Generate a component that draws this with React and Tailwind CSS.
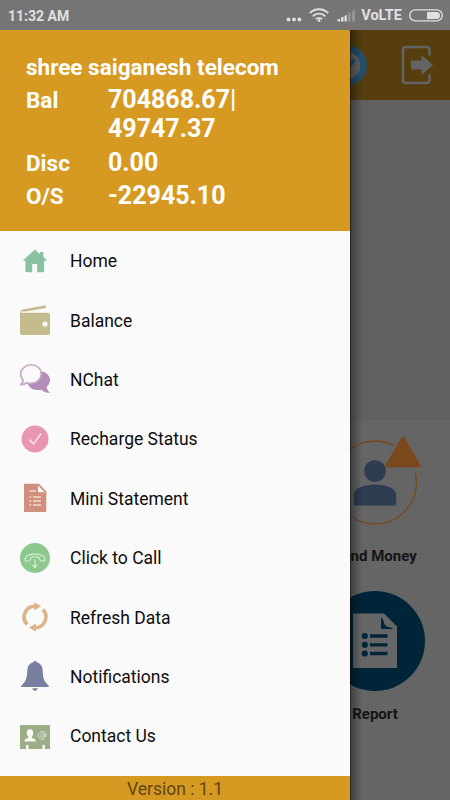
import React from "react";

const HomeIcon = () => (
  <svg viewBox="0 0 30 30" className="w-[30px] h-[30px] text-[#88c0a1]" fill="currentColor">
    <path d="M15 3.6 2.6 14.8h2.8v9.8q0 1.6 1.6 1.6h5.2V18h5v8.200h5.300q1.600 0 1.600-1.600v-9.800h3.300l-4-3.700V6h-3.400v2.200z" />
  </svg>
);

const WalletIcon = () => (
  <svg viewBox="0 0 30 30" className="w-[30px] h-[30px] text-[#c4bb8d]">
    <path d="M0 7.5Q.3 5 3 4.4L25 .2q1.2 0 1 2.9L6 6.6H1.6z" fill="currentColor" />
    <path d="M0 6.8q1 .9 2.5.9H28q2 0 2 2V28q0 2-2 2H2q-2 0-2-2z" fill="currentColor" />
    <circle cx="25" cy="19" r="2.6" fill="#fafafa" />
  </svg>
);

const ChatIcon = () => (
  <svg viewBox="0 0 30 30" className="w-[30px] h-[30px] text-[#b38db5]" fill="currentColor">
    <path d="M22 7.5c5 1.2 8 4.6 8 8.5 0 2.6-1.3 4.9-3.3 6.6.2 2.700 1 4.300 3.300 6.200-3.300.3-6-.7-8.200-3.100-6.800 1.200-12.300-1-13.900-5.700z" />
    <path
      d="M11.3.8C17 .8 21.3 4.9 21.3 10S17 19.3 11.3 19.300q-2 0-4.200-.6-2.200 2-6.500 2 2.400-2 2.600-4.300C1.500 14.600.7 12.500.7 10 .7 4.900 5.500.8 11.300.8z"
      fill="#fafafa"
      stroke="#c3a4c5"
      strokeWidth="1.6"
    />
  </svg>
);

const CheckIcon = () => (
  <svg viewBox="0 0 30 30" className="w-[30px] h-[30px]">
    <circle cx="15" cy="15" r="13.5" fill="#e997b0" />
    <path d="m9.3 15.600 4.300 4.300 7.500-10.400" fill="none" stroke="#f9e3ea" strokeWidth="1.5" />
  </svg>
);

const StatementIcon = () => (
  <svg viewBox="0 0 30 30" className="w-[30px] h-[30px]">
    <path d="M4 .8h15l7.300 7.700V29H4z" fill="#d18f7e" />
    <path d="M18 2.400v6.800h6.500z" fill="#fafafa" />
    <path
      d="M9.300 8H16M9.300 14h2M13 14h8M9.300 18h2M13 18h8M9.300 22h2M13 22h8"
      stroke="#f1d8d1"
      strokeWidth="1.7"
    />
  </svg>
);

const CallIcon = () => (
  <svg viewBox="0 0 30 30" className="w-[30px] h-[30px]">
    <circle cx="15" cy="15" r="15" fill="#8dc98f" />
    <g fill="none" stroke="#d5ecd6" strokeWidth="1.2" strokeLinejoin="round">
      <path d="M5.300 18v-2.800C7.200 9.700 22.800 9.700 24.700 15.200V18l-4.300-.2-1.400-3c-1.800-1.400-6.200-1.400-8 0l-1.400 3z" />
      <path d="M15 16.500v7.500M12.700 21.800 15 24.500l2.300-2.700" />
    </g>
  </svg>
);

const RefreshIcon = () => (
  <svg viewBox="0 0 30 30" className="w-[30px] h-[30px] text-[#dbb589]">
    <g fill="none" stroke="currentColor" strokeWidth="3.6">
      <path d="M7.200 22.600A10.800 10.800 0 0 1 15.500 4.300" />
      <path d="M22.800 7.400A10.800 10.800 0 0 1 14.500 25.700" />
    </g>
    <path d="m14.200.3 7 4-7 4.200zM15.800 21.500l-6.800 4 6.800 4.200z" fill="currentColor" />
  </svg>
);

const BellIcon = () => (
  <svg viewBox="0 0 30 30" className="w-[30px] h-[30px] text-[#787f9f]" fill="currentColor">
    <path d="M15 0q1.800 0 2.200 1.600c3.500 1 5.300 3.600 5.500 8 .3 6.800 1 11 5.600 14.600q1 1 .4 1.800H1.300q-.6-.8.4-1.800C6.300 20.600 7 16.400 7.300 9.600c.2-4.400 2-7 5.500-8Q13.200 0 15 0z" />
    <path d="M12.300 27.300h5.400q-.3 2.500-2.700 2.500t-2.700-2.500z" />
  </svg>
);

const ContactIcon = () => (
  <svg viewBox="0 0 30 30" className="w-[30px] h-[30px]">
    <path d="M1 4h28q1 0 1 1v23h-5v-4h-2.500v4h-14v-4H6v4H0V5q0-1 1-1z" fill="#9bae87" />
    <path
      d="M10 8.300c2.300 0 3.200 1.500 3.200 3.700 0 1.800-.6 3-1.400 3.800v1l3.300 1.500q.6.600.6 2.200H4.500q0-1.600.6-2.200l3.200-1.500v-1C7.300 15 6.800 13.800 6.800 12c0-2.200.9-3.700 3.200-3.700z"
      fill="#fafafa"
    />
    <g fill="none" stroke="#d6dfce" strokeWidth="1">
      <circle cx="22.300" cy="14.500" r="1.800" />
      <path d="M24.200 12.500v3q1.800 1 2-1.300c0-4.700-7.900-4.700-7.900.3 0 4 4 4.600 6.500 3.200" />
    </g>
  </svg>
);

const menuItems = [
  { label: "Home", Icon: HomeIcon },
  { label: "Balance", Icon: WalletIcon },
  { label: "NChat", Icon: ChatIcon },
  { label: "Recharge Status", Icon: CheckIcon },
  { label: "Mini Statement", Icon: StatementIcon },
  { label: "Click to Call", Icon: CallIcon },
  { label: "Refresh Data", Icon: RefreshIcon },
  { label: "Notifications", Icon: BellIcon },
  { label: "Contact Us", Icon: ContactIcon },
];

const StatusBar = () => (
  <div className="h-[30px] shrink-0 bg-[#757575] text-[#e0e0e0] flex items-center pl-2 pr-[7px]">
    <span className="text-[14px] font-bold leading-none pt-[2px]">11:32 AM</span>
    <div className="ml-auto flex items-center">
      <svg width="16" height="20" viewBox="0 0 16 20" fill="currentColor">
        <circle cx="2.500" cy="14.500" r="1.900" />
        <circle cx="8" cy="14.500" r="1.900" />
        <circle cx="13.400" cy="14.500" r="1.900" />
      </svg>
      <svg width="20" height="20" viewBox="0 0 20 20" className="ml-[7px]" fill="none" stroke="currentColor" strokeWidth="1.8">
        <path d="M.8 8.200C5.500 2.900 14.500 2.900 19.200 8.200M3.800 11.300c3.300-3.700 9.100-3.700 12.400 0M6.800 14.200c1.700-1.900 4.700-1.900 6.400 0" />
        <circle cx="10" cy="15.500" r="1.400" fill="currentColor" stroke="none" />
      </svg>
      <svg width="19" height="20" viewBox="0 0 19 20" className="ml-2" fill="currentColor">
        <path d="M.5 16.500v-2l2.500-.8v2.800zM4 16.500v-4l2.500-1v5zM7.500 16.500V11L9.800 9.700v6.800z" />
        <path d="M11 16.500V8.500L13.500 7v9.500zM15 16.500V6.200L18 4v12.500z" opacity=".3" />
      </svg>
      <span className="text-[14.500px] font-bold leading-none pt-[2px] ml-[5px]">VoLTE</span>
      <svg width="34" height="13" viewBox="0 0 34 13" className="ml-[7px]">
        <rect x=".7" y=".9" width="32.600" height="11" rx="5.500" fill="none" stroke="currentColor" strokeWidth="1.3" />
        <path d="M18 2.900h9.500a3.500 3.500 0 0 1 0 7H18z" fill="currentColor" />
      </svg>
    </div>
  </div>
);

const Toolbar = () => (
  <div className="h-[70px] shrink-0 bg-[#563e0f] flex items-center justify-end pr-4">
    <svg width="41" height="41" viewBox="0 0 41 41">
      <circle cx="20.500" cy="20.500" r="17" fill="#626262" stroke="#23506f" strokeWidth="6.5" />
      <path d="m13 21 5 6 10.500-12.500" fill="none" stroke="#23506f" strokeWidth="3.5" />
    </svg>
    <svg width="33" height="40" viewBox="0 0 33 40" className="ml-[34px]">
      <path
        d="M28.500 10.500V5q0-3-3-3H5Q2 2 2 5v30q0 3 3 3h20.500q3 0 3-3v-5.500"
        fill="none"
        stroke="#636363"
        strokeWidth="2.500"
      />
      <path d="M10 15.500h10.500V10L32 20 20.500 30v-5.500H10z" fill="#636363" />
    </svg>
  </div>
);

const SendMoneyIcon = () => (
  <svg width="100" height="100" viewBox="0 0 100 100">
    <circle cx="50" cy="49.500" r="41.500" fill="none" stroke="#79481b" strokeWidth="1.300" />
    <path d="M78 3 58 36h38z" fill="#656565" stroke="#656565" strokeWidth="5" />
    <path d="M78 4.500 61.500 33h33z" fill="#79481b" stroke="#79481b" strokeWidth="2.500" strokeLinejoin="round" />
    <circle cx="50" cy="38" r="10.800" fill="#2d3d52" />
    <path d="M28.800 72.500V62c0-14 42.400-14 42.400 0v10.500z" fill="#2d3d52" />
  </svg>
);

const ReportIcon = () => (
  <svg width="100" height="100" viewBox="0 0 100 100">
    <circle cx="50" cy="50" r="50" fill="#012538" />
    <path d="M28 22.500h31l13 13V77H28z" fill="#666" />
    <path d="M56.500 27v10.500h10.800q-7-1-8.500-4.500-.8-4-2.300-6z" fill="#012538" stroke="#012538" />
    <g fill="#012538">
      <circle cx="39.800" cy="45" r="3.100" />
      <circle cx="39.800" cy="53.800" r="3.100" />
      <circle cx="39.800" cy="62.500" r="3.100" />
    </g>
    <path d="M45 45h17.500M45 53.800h17.500M45 62.500h17.500" stroke="#012538" strokeWidth="3.300" />
  </svg>
);

const Tile = ({ label, children }) => (
  <div className="w-[150px] flex flex-col items-center gap-[14px] text-[15px] leading-[18px] font-bold text-[#141414]">
    {children}
    <span>{label}</span>
  </div>
);

const Stat = ({ name, children }) => (
  <div className="flex items-baseline">
    <span className="w-[82px] shrink-0 text-[22.500px] leading-none">{name}</span>
    <span className="text-[25px] leading-[29.300px]">{children}</span>
  </div>
);

const Drawer = () => (
  <aside className="absolute left-0 top-[30px] w-[350px] h-[770px] bg-[#fafafa] flex flex-col">
    <div className="h-[201px] shrink-0 bg-[#d69922] text-white font-bold pl-[26px] pt-[23px] flex flex-col gap-1">
      <div className="text-[22.500px] leading-[28px]">shree saiganesh telecom</div>
      <Stat name="Bal">
        704868.67|
        <br />
        49747.37
      </Stat>
      <Stat name="Disc">0.00</Stat>
      <Stat name="O/S">-22945.10</Stat>
    </div>
    <nav className="flex-1">
      {menuItems.map(({ label, Icon }) => (
        <div key={label} className="h-[59.400px] flex items-center pl-5 gap-5">
          <Icon />
          <span className="text-[17.500px] text-[#0d0d0d] pt-[1.500px]">{label}</span>
        </div>
      ))}
    </nav>
    <div className="h-6 shrink-0 bg-[#d69922] text-center text-[17.500px] leading-[27px] text-[#604614]">
      Version : 1.1
    </div>
    {/* edge shadow */}
    <div className="absolute left-full inset-y-0 w-3 border-l border-black/60 bg-linear-to-r from-black/35 to-transparent" />
  </aside>
);

export default function App() {
  return (
    <div className="relative w-[450px] h-[800px] overflow-hidden flex flex-col bg-[#656565] font-['Roboto',sans-serif]">
      <StatusBar />
      <Toolbar />
      <div className="h-[320px] shrink-0 bg-[#606060]" />
      <div className="self-end flex flex-col pt-[12.500px] gap-[26px]">
        <Tile label="Send Money">
          <SendMoneyIcon />
        </Tile>
        <Tile label="Report">
          <ReportIcon />
        </Tile>
      </div>
      <Drawer />
    </div>
  );
}
